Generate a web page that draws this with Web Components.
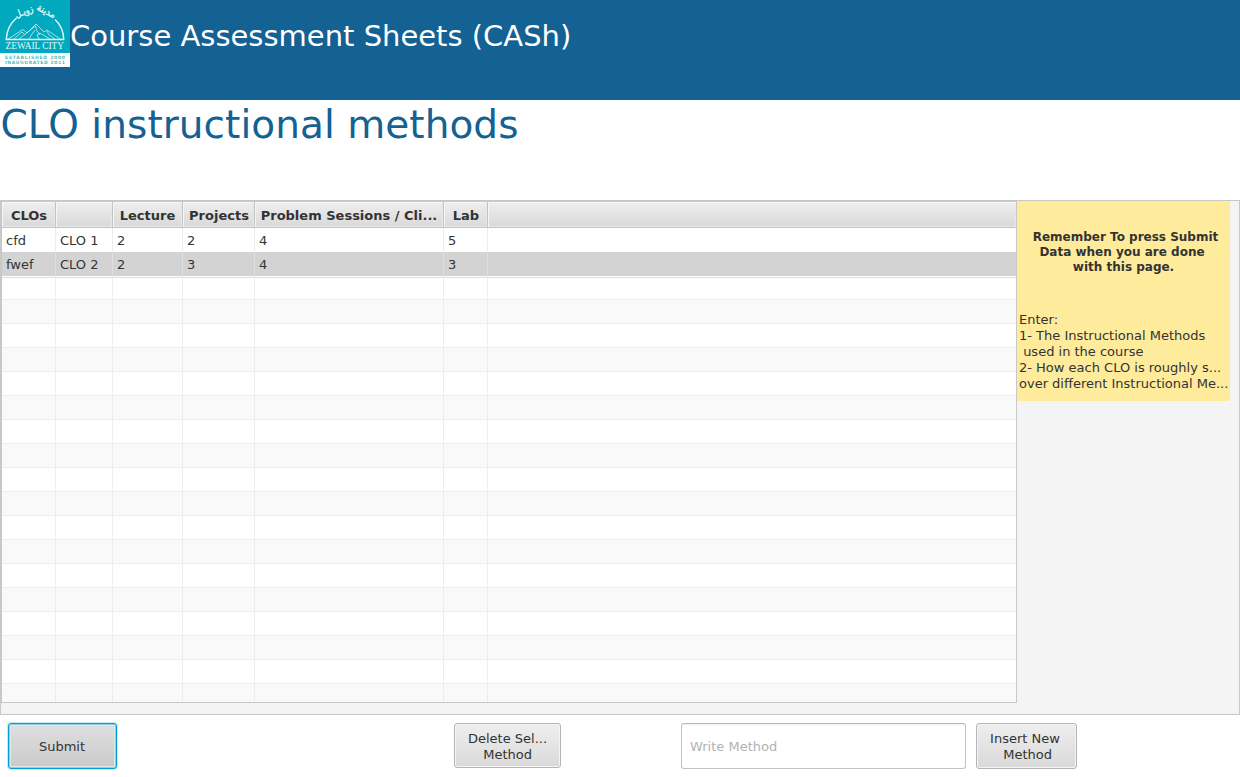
<!DOCTYPE html>
<html lang="en">
<head>
<meta charset="utf-8">
<title>Course Assessment Sheets (CASh)</title>
<style>
html,body{margin:0;height:100%;background:#fff;overflow:hidden}
body{font:13px/16px "DejaVu Sans",sans-serif;color:#333}
</style>
</head>
<body>
<cash-app></cash-app>
<script>
function define(name, html, setup) {
  customElements.define(name, class extends HTMLElement {
    connectedCallback() {
      if (this.shadowRoot) return;
      const t = document.createElement('template');
      t.innerHTML = html;
      this.attachShadow({mode: 'open'}).append(t.content.cloneNode(true));
      if (setup) setup(this, this.shadowRoot);
    }
  });
}

define('city-logo', `
<style>:host{display:block;width:70px;height:67px}svg{display:block}</style>
<svg width="70" height="67" viewBox="0 0 70 67" font-family="DejaVu Sans, sans-serif">
  <rect width="70" height="67" fill="#fff"/>
  <rect width="70" height="53" fill="#00a9bd"/>
  <g fill="none" stroke="#e2f7fa">
    <path d="M16.500 18C10 23.500 6.500 31 6.300 39.500H63.700C63.500 31 60.500 24.500 55 19.500" stroke-width="1.500"/>
    <path d="M7.500 39.500L23 29.500L27 33L36 24L44 32L47 30L61 39.500M14 39L22 32L25 35M19 39L35.500 26L37 31L40 35M29 39L32 34L35 30M39 39L37 35L40 33L50 39M47 31L49 35L55 39" stroke-width=".9" stroke-opacity=".8"/>
  </g>
  <g fill="#e8fafb" stroke="#e8fafb" stroke-width=".3" font-size="9.500" text-anchor="middle">
    <text transform="translate(25 14.500) rotate(-22)" textLength="19" lengthAdjust="spacingAndGlyphs">زويـل</text>
    <text transform="translate(45 14) rotate(27)" textLength="20" lengthAdjust="spacingAndGlyphs">مدينة</text>
  </g>
  <text x="5.500" y="49" fill="#e2f7fa" font-family="Liberation Serif, serif" font-size="10" textLength="58.500" lengthAdjust="spacingAndGlyphs">ZEWAIL CITY</text>
  <g fill="#55b9c0" font-size="4.500" font-weight="bold">
    <text x="5" y="59.300" textLength="60">ESTABLISHED 2000</text>
    <text x="5" y="64" textLength="60">INAUGURATED 2011</text>
  </g>
</svg>`);

define('app-header', `
<style>
:host{display:flex;align-items:flex-start;height:100px;background:#146194;color:#fff}
h1{margin:0;padding-top:19px;font-size:29px;line-height:34px;font-weight:400;white-space:nowrap}
</style><city-logo></city-logo><h1><slot></slot></h1>`);

define('page-title', `
<style>
:host{display:block;height:100px;color:#146194}
h2{margin:0;padding:2px 0 0 .5px;font-size:39px;line-height:46px;font-weight:400;letter-spacing:.05px;white-space:nowrap}
</style><h2><slot></slot></h2>`);

define('methods-table', `
<style>
:host{display:flex;flex-direction:column;box-sizing:border-box;width:1016px;height:502px;border:1px solid #c8c8c8;background:#fff;overflow:hidden}
.head,.row{display:grid;grid-template-columns:54px 57px 70px 72px 189px 44px 1fr;flex:none}
.head{height:26px;font-weight:700;font-size:13px}
.head div{box-sizing:border-box;border-right:1px solid #c3c3c3;border-bottom:1px solid #c3c3c3;background:linear-gradient(#efefef,#d9d9d9);box-shadow:inset 1px 1px #f6f6f6,inset -1px -1px #e8e8e8;text-align:center;padding-left:1px;line-height:27px;white-space:nowrap;overflow:hidden}
.head div:nth-child(3),.head div:nth-child(5){padding-left:0}
.head div:last-child{border-right:0}
.row{height:24px}
.row div{box-sizing:border-box;border-right:1px solid #ededed;border-bottom:1px solid #ededed;padding-left:4px;line-height:25px;white-space:nowrap}
.row div:last-child{border-right:0}
.row.alt{background:#f9f9f9}
.row.sel{background:#d3d3d3}
.row.sel div{border-color:#dedede}
</style>`, (el, root) => {
  const add = (cls, cells) => {
    const r = document.createElement('div');
    r.className = cls;
    for (const c of cells) {
      const d = document.createElement('div');
      d.textContent = c;
      r.append(d);
    }
    root.append(r);
  };
  add('head', ['CLOs', '', 'Lecture', 'Projects', 'Problem Sessions / Cli...', 'Lab', '']);
  add('row', ['cfd', 'CLO 1', '2', '2', '4', '5', '']);
  add('row sel', ['fwef', 'CLO 2', '2', '3', '4', '3', '']);
  for (let i = 0; i < 18; i++) add(i % 2 ? 'row alt' : 'row', ['', '', '', '', '', '', '']);
});

define('side-note', `
<style>
:host{display:block;box-sizing:border-box;width:213px;height:200px;background:#ffeb9c}
.remind{padding:29px 0 0 4px;text-align:center;font-weight:700;font-size:12px;line-height:15px}
.steps{padding:37px 0 0 2px;white-space:pre}
::slotted(span){display:block;white-space:nowrap}
</style><div class="remind"><slot name="remind"></slot></div><div class="steps"><slot></slot></div>`);

define('ui-button', `
<style>
:host{display:block}
button{box-sizing:border-box;width:100%;height:100%;padding:1px 0 0;border:1px solid #b5b5b5;border-radius:3px;background:linear-gradient(#efefef,#d9d9d9);box-shadow:inset 0 0 0 1px #f4f4f4;color:#333;font:inherit;white-space:pre;text-align:center;display:flex;align-items:center;justify-content:center}
:host(.del) button{padding-top:2px}
:host([focused]) button{padding-right:1px;border-color:#039ed3;background:linear-gradient(#e0e0e0,#cacaca);box-shadow:0 0 0 1px #c9eaf5,inset 0 0 0 1px #8fcfe6,inset 0 0 0 2px #e2e7e9}
</style><button><span><slot></slot></span></button>`);

define('ui-field', `
<style>
:host{display:block}
input{display:block;box-sizing:border-box;width:100%;height:100%;border:1px solid #c3c3c3;border-top-color:#b8b8b8;border-radius:3px;padding:0 8px;font:inherit;outline:0;background:#fff;box-shadow:inset 0 1px 1px #f0f0f0}
input::placeholder{color:#b2b2b2;opacity:1}
</style><input>`, (el, root) => { root.querySelector('input').placeholder = el.getAttribute('placeholder'); });

define('cash-app', `
<style>
:host{display:flex;flex-direction:column;width:1240px;height:777px}
main{display:flex;align-items:flex-start;box-sizing:border-box;height:515px;border:1px solid #c8c8c8;background:#f4f4f4}
footer{display:grid;grid-template-columns:109px 337px 107px 120px 285px 10px 101px;padding:8px 0 0 8px;align-items:start}
footer>*{height:46px}
.del{grid-column:3;height:45px}
.field{grid-column:5}
.ins{grid-column:7}
.l2{padding-right:7px}
.l3{padding-right:4px}
.b1{padding-right:3px}
.b2{padding-right:4px}
.b3{padding-right:2px}
</style>
<app-header>Course Assessment Sheets (CASh)</app-header>
<page-title>CLO instructional methods</page-title>
<main>
  <methods-table></methods-table>
  <side-note><span slot="remind">Remember To press Submit</span><span slot="remind" class="l2">Data when you are done</span><span slot="remind" class="l3">with this page.</span>Enter:
1- The Instructional Methods
 used in the course
2- How each CLO is roughly s...
over different Instructional Me...</side-note>
</main>
<footer>
  <ui-button focused>Submit</ui-button>
  <ui-button class="del">Delete Sel...
<span class="b2"> Method</span></ui-button>
  <ui-field class="field" placeholder="Write Method"></ui-field>
  <ui-button class="ins"><span class="b1">Insert New</span>
<span class="b3"> Method</span></ui-button>
</footer>`);
</script>
</body>
</html>
